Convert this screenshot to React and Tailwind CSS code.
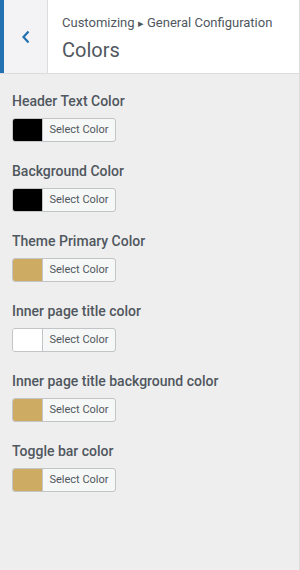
import React from "react";

const controls = [
  { label: "Header Text Color", color: "#000000" },
  { label: "Background Color", color: "#000000" },
  { label: "Theme Primary Color", color: "#cdab62" },
  { label: "Inner page title color", color: "#ffffff" },
  { label: "Inner page title background color", color: "#cdab62" },
  { label: "Toggle bar color", color: "#cdab62" },
];

function ColorControl({ label, color }) {
  return (
    <div className="mb-[19px]">
      <div className="text-[14px] leading-[20px] font-medium text-[#50575e]">{label}</div>
      <div className="mt-[7px] flex h-[24px] w-[104px] overflow-hidden rounded-[3px] border border-[#c3c4c7] bg-[#f6f7f7]">
        <div className="w-[30px] border-r border-[#c3c4c7]" style={{ backgroundColor: color }} />
        <div className="flex flex-1 items-center justify-center text-[11px] text-[#50575e]">
          Select Color
        </div>
      </div>
    </div>
  );
}

export default function App() {
  return (
    <div
      className="flex h-[570px] w-[300px] flex-col border-r border-[#dcdcde] bg-[#eeeeee]"
      style={{ fontFamily: "Roboto, 'Noto Sans', sans-serif" }}
    >
      <div className="flex h-[74px] shrink-0 border-b border-[#dcdcde] bg-white">
        <button className="flex w-[48px] items-center justify-center border-l-4 border-r border-l-[#2271b1] border-r-[#dcdcde] bg-[#f3f3f5] text-[#2271b1]">
          <svg width="10" height="14" viewBox="0 0 10 14" fill="none">
            <path d="M7.5 1.5L2.5 7l5 5.5" stroke="currentColor" strokeWidth="2.2" />
          </svg>
        </button>
        <div className="flex flex-col pl-[14px] pt-[14px]">
          <div className="text-[13px] leading-[18px] text-[#50575e]">
            Customizing <span className="text-[11px]">▸</span> General Configuration
          </div>
          <div className="mt-[4px] text-[20px] leading-[26px] text-[#50575e]">Colors</div>
        </div>
      </div>
      <div className="flex-1 px-[12px] pt-[17px]">
        {controls.map((c) => (
          <ColorControl key={c.label} {...c} />
        ))}
      </div>
    </div>
  );
}
